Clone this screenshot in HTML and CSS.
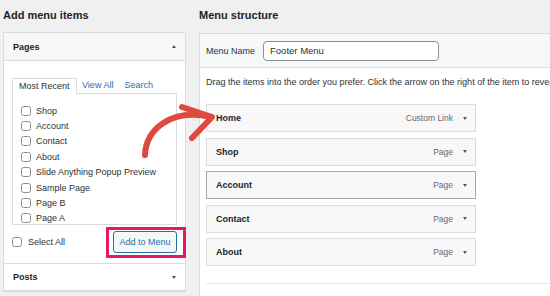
FILE: index.html
```html
<!DOCTYPE html>
<html>
<head>
  <title>Menus</title>
  <link rel="stylesheet" href="styles.css">
</head>
<body>
  <div class="screen">

    <div class="col col-left">
      <h2 class="col-title">Add menu items</h2>
      <div class="box">
        <div class="box-head">
          <span>Pages</span>
          <span class="caret caret-up"></span>
        </div>
        <div class="box-body">
          <div class="tabs">
            <div class="tab active">Most Recent</div>
            <div class="tab">View All</div>
            <div class="tab">Search</div>
          </div>
          <ul class="tab-panel">
            <li><span class="check"></span>Shop</li>
            <li><span class="check"></span>Account</li>
            <li><span class="check"></span>Contact</li>
            <li><span class="check"></span>About</li>
            <li><span class="check"></span>Slide Anything Popup Preview</li>
            <li><span class="check"></span>Sample Page</li>
            <li><span class="check"></span>Page B</li>
            <li><span class="check"></span>Page A</li>
          </ul>
          <div class="box-foot">
            <label class="select-all"><span class="check"></span>Select All</label>
            <span class="btn-wrap">
              <button class="add-btn">Add to Menu</button>
              <span class="highlight"></span>
            </span>
          </div>
        </div>
        <div class="box-head box-head-next">
          <span>Posts</span>
          <span class="caret caret-down"></span>
        </div>
      </div>
    </div>

    <div class="col col-right">
      <h2 class="col-title">Menu structure</h2>
      <div class="box box-menu">
        <div class="menu-head">
          <span class="menu-label">Menu Name</span>
          <input class="menu-name" type="text" value="Footer Menu">
        </div>
        <div class="menu-body">
          <p class="hint">Drag the items into the order you prefer. Click the arrow on the right of the item to reveal additional configuration options.</p>
          <ul class="menu-items">
            <li class="menu-item"><span class="item-title">Home</span><span class="item-type">Custom Link</span><span class="caret caret-down"></span></li>
            <li class="menu-item"><span class="item-title">Shop</span><span class="item-type">Page</span><span class="caret caret-down"></span></li>
            <li class="menu-item selected"><span class="item-title">Account</span><span class="item-type">Page</span><span class="caret caret-down"></span></li>
            <li class="menu-item"><span class="item-title">Contact</span><span class="item-type">Page</span><span class="caret caret-down"></span></li>
            <li class="menu-item"><span class="item-title">About</span><span class="item-type">Page</span><span class="caret caret-down"></span></li>
          </ul>
          <div class="menu-settings"></div>
        </div>
      </div>
    </div>

    <!-- hand drawn pointer -->
    <svg class="arrow" width="550" height="296" viewBox="0 0 550 296">
      <path d="M145,155 C146,130 170,108 211,117" fill="none" stroke="#de4a3f" stroke-width="6" stroke-linecap="round"/>
      <path d="M182,107 L212,117 L192,138" fill="none" stroke="#de4a3f" stroke-width="6" stroke-linecap="round" stroke-linejoin="round"/>
    </svg>
  </div>
</body>
</html>
```

FILE: styles.css
```css
body {
  margin: 0;
  width: 550px;
  height: 296px;
  overflow: hidden;
  background: #f0f0f1;
  font-family: "Liberation Sans", Arial, sans-serif;
  color: #2c3338;
}

.screen {
  position: relative;
  display: flex;
  gap: 13px;
  padding-left: 3px;
  height: 296px;
}

.col {
  flex-shrink: 0;
}

.col-left {
  width: 183px;
}

.col-right {
  width: 420px;
}

.col-title {
  margin: 0;
  padding: 8px 0 10px;
  font-size: 11px;
  line-height: 14px;
  font-weight: 700;
  color: #1d2327;
}

.box {
  background: #fff;
  border: 1px solid #dcdcde;
}

.box-head {
  display: flex;
  align-items: center;
  justify-content: space-between;
  height: 27px;
  padding: 0 9px;
  background: #f6f7f7;
  border-bottom: 1px solid #dcdcde;
  font-size: 9px;
  font-weight: 700;
  color: #1d2327;
}

.box-head-next {
  height: 26px;
  background: #fff;
  border-top: 1px solid #dcdcde;
}

.caret {
  width: 0;
  height: 0;
  border-left: 2.5px solid transparent;
  border-right: 2.5px solid transparent;
}

.caret-up {
  border-bottom: 3px solid #50575e;
}

.caret-down {
  border-top: 3px solid #50575e;
}

.box-body {
  padding: 17px 8px 0;
}

.tabs {
  display: flex;
  height: 15px;
  font-size: 9px;
}

.tab {
  box-sizing: border-box;
  height: 15px;
  padding: 0 5.5px;
  line-height: 15px;
  color: #2271b1;
}

.tab.active {
  position: relative;
  z-index: 1;
  height: 16px;
  padding: 0 6px;
  border: 1px solid #dcdcde;
  border-bottom: none;
  background: #fff;
  line-height: 14px;
  color: #2c3338;
}

.tab-panel {
  box-sizing: border-box;
  height: 132px;
  margin: 0;
  padding: 9px 0 0 8px;
  list-style: none;
  overflow: hidden;
  border: 1px solid #dcdcde;
  font-size: 9px;
}

.tab-panel li {
  display: flex;
  align-items: center;
  height: 15.4px;
}

.check {
  box-sizing: border-box;
  flex-shrink: 0;
  width: 10px;
  height: 10px;
  margin-right: 5px;
  border: 1px solid #8c8f94;
  border-radius: 2.5px;
  background: #fff;
}

.box-foot {
  display: flex;
  justify-content: space-between;
  align-items: center;
  height: 38px;
  padding: 6px 0 10px;
  box-sizing: border-box;
}

.select-all {
  display: flex;
  align-items: center;
  font-size: 9px;
}

.select-all .check {
  margin-right: 6px;
}

.btn-wrap {
  position: relative;
  display: block;
}

.add-btn {
  display: block;
  box-sizing: border-box;
  width: 64px;
  height: 22px;
  padding: 0;
  border: 1px solid #2271b1;
  border-radius: 3px;
  background: #f6f7f7;
  font-family: inherit;
  font-size: 9px;
  color: #2271b1;
}

/* pink annotation box */
.highlight {
  position: absolute;
  top: -4px;
  left: -7px;
  right: -9px;
  bottom: -5px;
  border: 3px solid #e8185e;
}

.box-menu {
  margin-top: 1px;
}

.menu-head {
  display: flex;
  align-items: center;
  gap: 8px;
  height: 33px;
  padding: 0 6px;
  background: #f6f7f7;
  border-bottom: 1px solid #dcdcde;
}

.menu-label {
  font-size: 9px;
  color: #2c3338;
}

.menu-name {
  box-sizing: border-box;
  width: 176px;
  height: 20px;
  padding: 0 6px;
  border: 1px solid #8c8f94;
  border-radius: 4px;
  background: #fff;
  font-family: inherit;
  font-size: 9.5px;
  color: #2c3338;
}

.menu-body {
  padding: 8px 6px 0;
}

.hint {
  margin: 0 0 16px;
  font-size: 9px;
  line-height: 12px;
  white-space: nowrap;
}

.menu-items {
  display: flex;
  flex-direction: column;
  gap: 5.5px;
  margin: 0;
  padding: 0;
  list-style: none;
}

.menu-item {
  display: flex;
  align-items: center;
  box-sizing: border-box;
  width: 270px;
  height: 28px;
  padding: 0 8px 0 9px;
  border: 1px solid #dcdcde;
  background: #f9f8f9;
}

.menu-item.selected {
  border-color: #a7aaad;
}

.item-title {
  flex: 1;
  font-size: 9px;
  font-weight: 700;
  color: #1d2327;
}

.item-type {
  margin-right: 10px;
  font-size: 8.5px;
  color: #646970;
}

.menu-settings {
  margin-top: 17px;
  border-top: 1px solid #e8e8e8;
  height: 20px;
}

.arrow {
  position: absolute;
  top: 0;
  left: 0;
  pointer-events: none;
}
```
